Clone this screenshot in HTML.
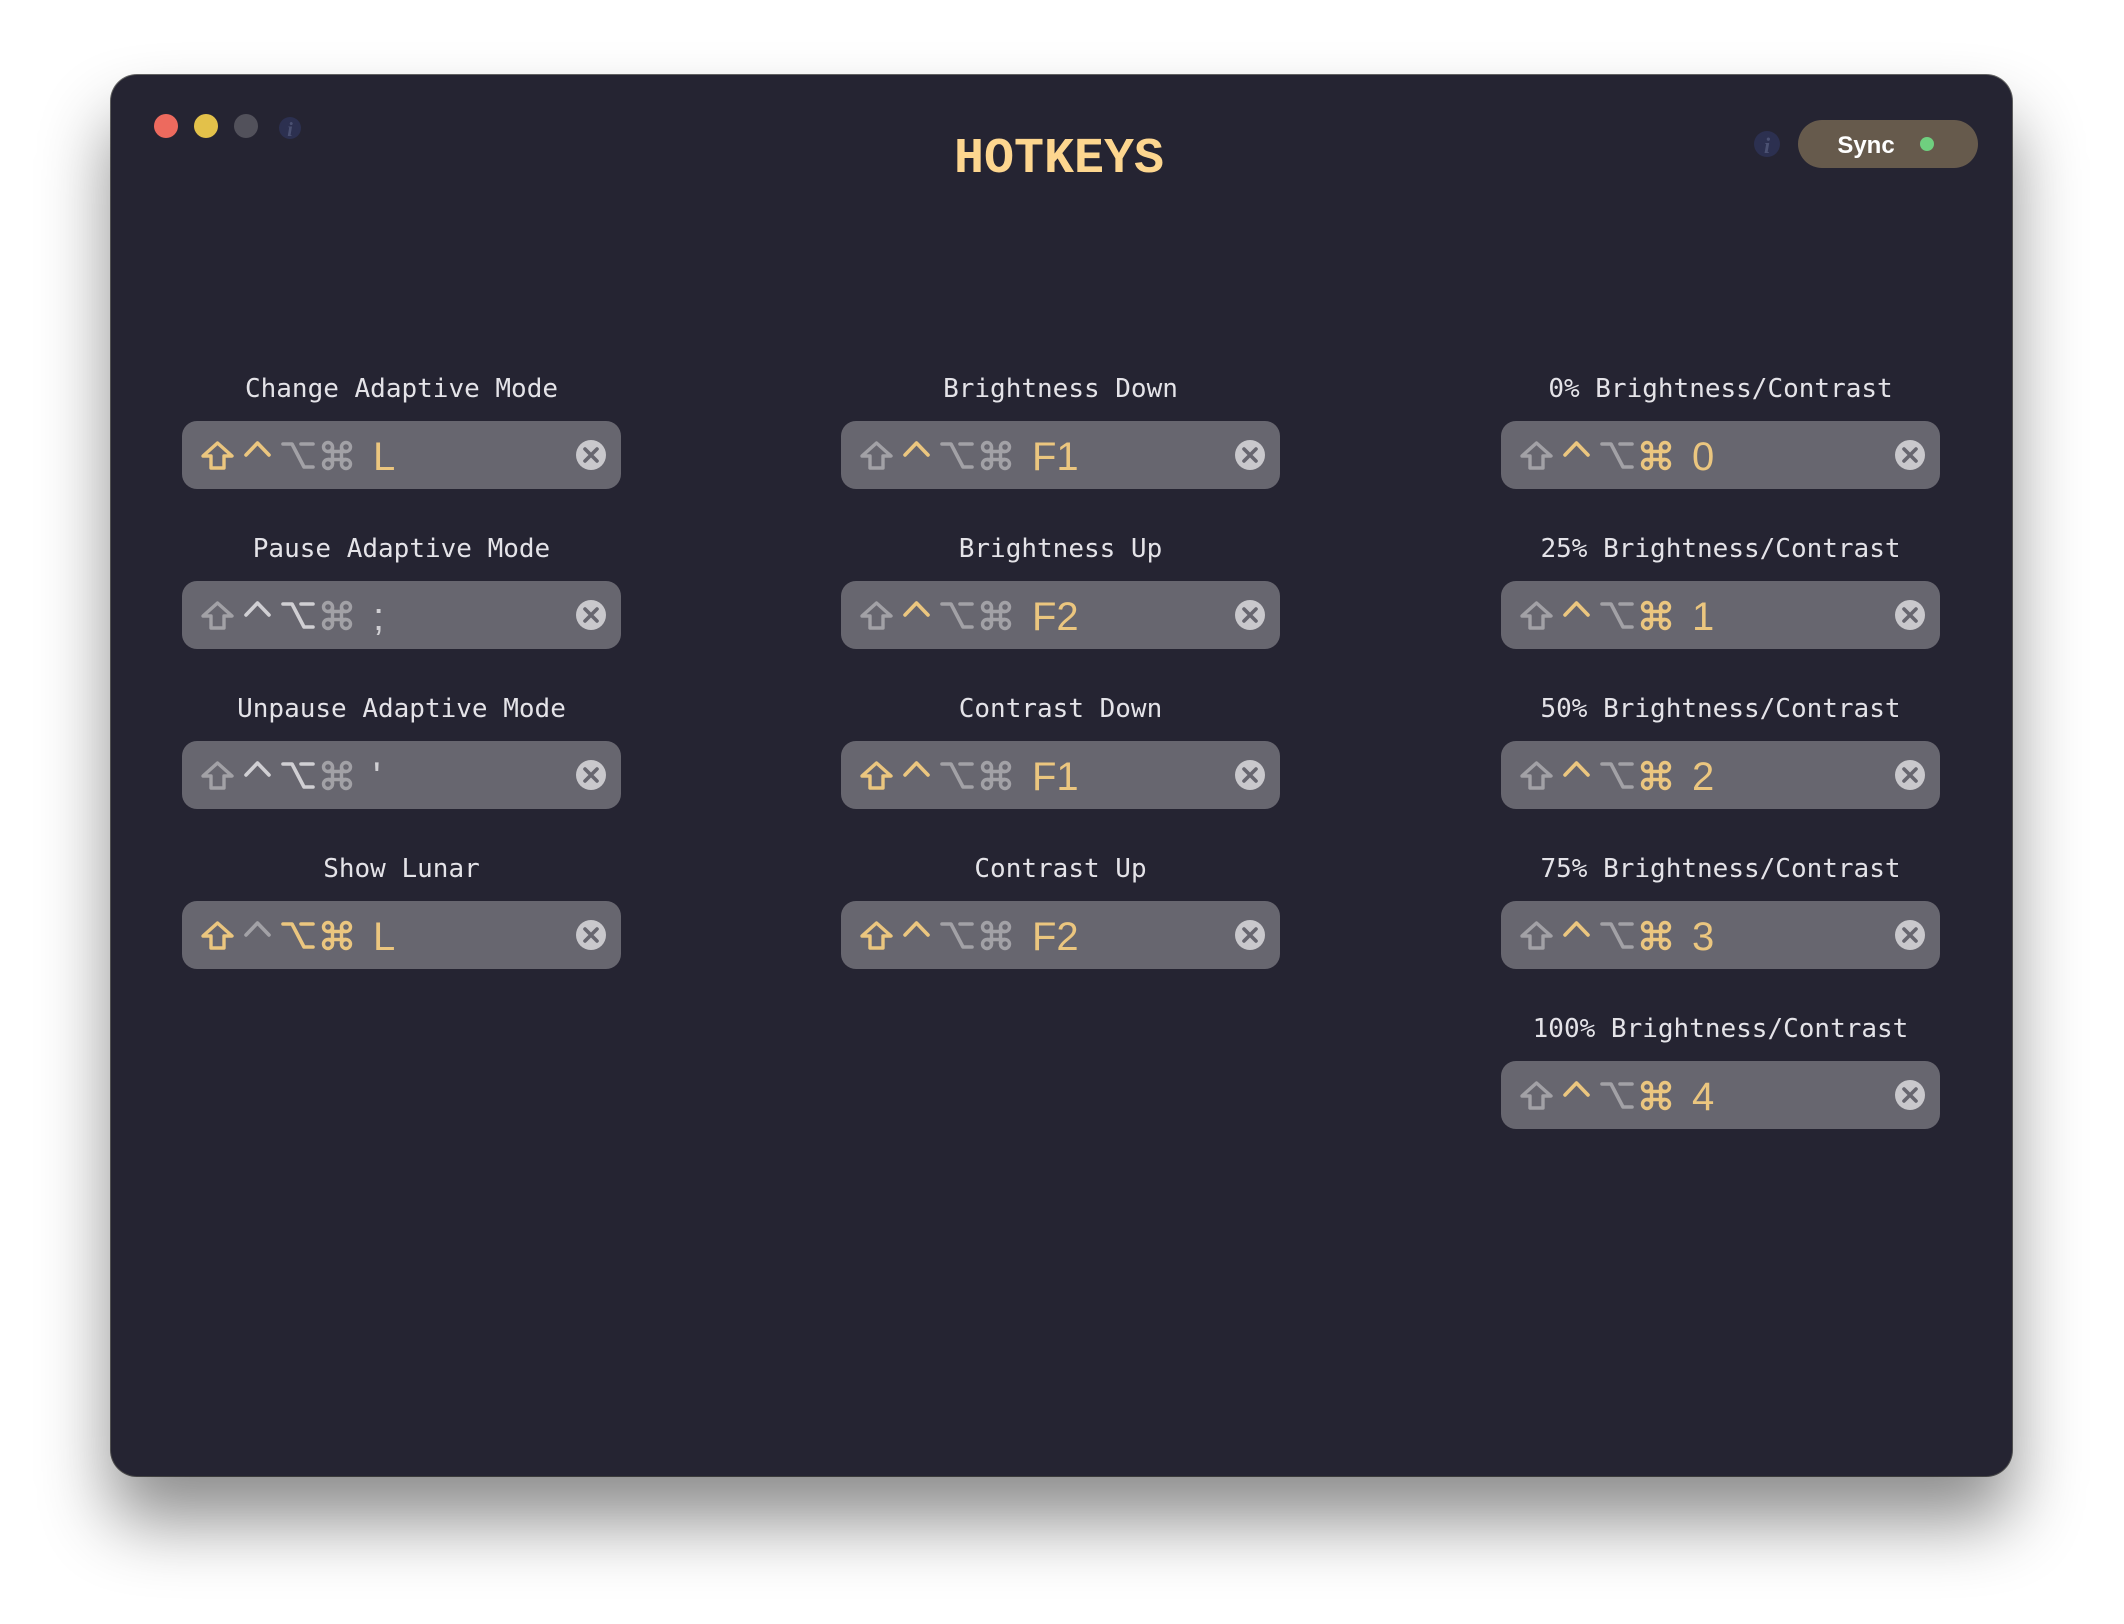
<!DOCTYPE html>
<html><head><meta charset="utf-8"><style>
html,body{margin:0;padding:0;background:#fff;width:2124px;height:1624px;overflow:hidden}
#win{position:absolute;left:111px;top:75px;width:1901px;height:1401px;background:#252432;border-radius:26px;box-shadow:0 45px 70px rgba(0,0,0,0.45),0 0 0 1px rgba(0,0,0,0.6)}
svg{position:absolute;left:0;top:0}
.lbl{font-family:"DejaVu Sans Mono","Liberation Mono",monospace;font-size:26px;fill:#e4e3e8}
.key{font-family:"Liberation Sans",sans-serif;font-size:40px}
</style></head><body>
<div id="win"></div>
<svg width="2124" height="1624" viewBox="0 0 2124 1624">
<defs>
<g id="shift"><path d="M16.5 2 L31 15 H23 V27 H10 V15 H2 Z" fill="none" stroke-width="3.4" stroke-linejoin="round"/></g>
<g id="caret"><path d="M2 14 L13.5 2 L25 14" fill="none" stroke-width="3.6" stroke-linecap="round" stroke-linejoin="round"/></g>
<g id="opt"><path d="M1 3 H10 L22 26 H31 M19 3 H31" fill="none" stroke-width="3.6" stroke-linecap="round" stroke-linejoin="round"/></g>
<g id="cmd" fill="none" stroke-width="3.4"><path d="M10.5 6 V23 M19.5 6 V23 M6 10.5 H24 M6 18.5 H24"/><circle cx="6" cy="6" r="4.5"/><circle cx="24" cy="6" r="4.5"/><circle cx="6" cy="23" r="4.5"/><circle cx="24" cy="23" r="4.5"/></g>
<g id="clr"><circle cx="0" cy="0" r="15" fill="#c9c8cc"/><path d="M-6 -6 L6 6 M6 -6 L-6 6" stroke="#67666f" stroke-width="3.6" stroke-linecap="round"/></g>
</defs>
<circle cx="166" cy="126" r="12" fill="#ed6a5e"/>
<circle cx="206" cy="126" r="12" fill="#e3c14a"/>
<circle cx="246" cy="126" r="12" fill="#52515b"/>
<circle cx="290" cy="128" r="11" fill="#2c3050"/>
<text x="290" y="136" text-anchor="middle" font-family="Liberation Serif,serif" font-style="italic" font-weight="bold" font-size="20" fill="#4b5172">i</text>
<text x="1059" y="172" text-anchor="middle" font-family="Liberation Mono,monospace" font-weight="bold" font-size="50" fill="#fdd68f">HOTKEYS</text>
<circle cx="1767" cy="144" r="13" fill="#2c3050"/>
<text x="1767" y="153" text-anchor="middle" font-family="Liberation Serif,serif" font-style="italic" font-weight="bold" font-size="22" fill="#4b5172">i</text>
<rect x="1798" y="120" width="180" height="48" rx="24" fill="#665a4c"/>
<text x="1866" y="153" text-anchor="middle" font-family="Liberation Sans,sans-serif" font-weight="bold" font-size="24" fill="#fff">Sync</text>
<circle cx="1927" cy="144" r="7" fill="#6fcf7f"/>

<g transform="translate(182,421)">
<text class="lbl" x="219.5" y="-24" text-anchor="middle">Change Adaptive Mode</text>
<rect width="439" height="68" rx="15" fill="#67666f"/>
<use href="#shift" x="19" y="20" stroke="#ebc67f"/><use href="#caret" x="62" y="20" stroke="#ebc67f"/><use href="#opt" x="100" y="20" stroke="#a2a1a6"/><use href="#cmd" x="140" y="20" stroke="#a2a1a6"/>
<text class="key" x="191" y="49" fill="#ebc67f">L</text><use href="#clr" x="409" y="34"/></g>

<g transform="translate(182,581)">
<text class="lbl" x="219.5" y="-24" text-anchor="middle">Pause Adaptive Mode</text>
<rect width="439" height="68" rx="15" fill="#67666f"/>
<use href="#shift" x="19" y="20" stroke="#a2a1a6"/><use href="#caret" x="62" y="20" stroke="#d0cfd3"/><use href="#opt" x="100" y="20" stroke="#d0cfd3"/><use href="#cmd" x="140" y="20" stroke="#a2a1a6"/>
<text class="key" x="191" y="49" fill="#d0cfd3">;</text><use href="#clr" x="409" y="34"/></g>

<g transform="translate(182,741)">
<text class="lbl" x="219.5" y="-24" text-anchor="middle">Unpause Adaptive Mode</text>
<rect width="439" height="68" rx="15" fill="#67666f"/>
<use href="#shift" x="19" y="20" stroke="#a2a1a6"/><use href="#caret" x="62" y="20" stroke="#d0cfd3"/><use href="#opt" x="100" y="20" stroke="#d0cfd3"/><use href="#cmd" x="140" y="20" stroke="#a2a1a6"/>
<text class="key" x="191" y="49" fill="#d0cfd3">'</text><use href="#clr" x="409" y="34"/></g>

<g transform="translate(182,901)">
<text class="lbl" x="219.5" y="-24" text-anchor="middle">Show Lunar</text>
<rect width="439" height="68" rx="15" fill="#67666f"/>
<use href="#shift" x="19" y="20" stroke="#ebc67f"/><use href="#caret" x="62" y="20" stroke="#a2a1a6"/><use href="#opt" x="100" y="20" stroke="#ebc67f"/><use href="#cmd" x="140" y="20" stroke="#ebc67f"/>
<text class="key" x="191" y="49" fill="#ebc67f">L</text><use href="#clr" x="409" y="34"/></g>

<g transform="translate(841,421)">
<text class="lbl" x="219.5" y="-24" text-anchor="middle">Brightness Down</text>
<rect width="439" height="68" rx="15" fill="#67666f"/>
<use href="#shift" x="19" y="20" stroke="#a2a1a6"/><use href="#caret" x="62" y="20" stroke="#ebc67f"/><use href="#opt" x="100" y="20" stroke="#a2a1a6"/><use href="#cmd" x="140" y="20" stroke="#a2a1a6"/>
<text class="key" x="191" y="49" fill="#ebc67f">F1</text><use href="#clr" x="409" y="34"/></g>

<g transform="translate(841,581)">
<text class="lbl" x="219.5" y="-24" text-anchor="middle">Brightness Up</text>
<rect width="439" height="68" rx="15" fill="#67666f"/>
<use href="#shift" x="19" y="20" stroke="#a2a1a6"/><use href="#caret" x="62" y="20" stroke="#ebc67f"/><use href="#opt" x="100" y="20" stroke="#a2a1a6"/><use href="#cmd" x="140" y="20" stroke="#a2a1a6"/>
<text class="key" x="191" y="49" fill="#ebc67f">F2</text><use href="#clr" x="409" y="34"/></g>

<g transform="translate(841,741)">
<text class="lbl" x="219.5" y="-24" text-anchor="middle">Contrast Down</text>
<rect width="439" height="68" rx="15" fill="#67666f"/>
<use href="#shift" x="19" y="20" stroke="#ebc67f"/><use href="#caret" x="62" y="20" stroke="#ebc67f"/><use href="#opt" x="100" y="20" stroke="#a2a1a6"/><use href="#cmd" x="140" y="20" stroke="#a2a1a6"/>
<text class="key" x="191" y="49" fill="#ebc67f">F1</text><use href="#clr" x="409" y="34"/></g>

<g transform="translate(841,901)">
<text class="lbl" x="219.5" y="-24" text-anchor="middle">Contrast Up</text>
<rect width="439" height="68" rx="15" fill="#67666f"/>
<use href="#shift" x="19" y="20" stroke="#ebc67f"/><use href="#caret" x="62" y="20" stroke="#ebc67f"/><use href="#opt" x="100" y="20" stroke="#a2a1a6"/><use href="#cmd" x="140" y="20" stroke="#a2a1a6"/>
<text class="key" x="191" y="49" fill="#ebc67f">F2</text><use href="#clr" x="409" y="34"/></g>

<g transform="translate(1501,421)">
<text class="lbl" x="219.5" y="-24" text-anchor="middle">0% Brightness/Contrast</text>
<rect width="439" height="68" rx="15" fill="#67666f"/>
<use href="#shift" x="19" y="20" stroke="#a2a1a6"/><use href="#caret" x="62" y="20" stroke="#ebc67f"/><use href="#opt" x="100" y="20" stroke="#a2a1a6"/><use href="#cmd" x="140" y="20" stroke="#ebc67f"/>
<text class="key" x="191" y="49" fill="#ebc67f">0</text><use href="#clr" x="409" y="34"/></g>

<g transform="translate(1501,581)">
<text class="lbl" x="219.5" y="-24" text-anchor="middle">25% Brightness/Contrast</text>
<rect width="439" height="68" rx="15" fill="#67666f"/>
<use href="#shift" x="19" y="20" stroke="#a2a1a6"/><use href="#caret" x="62" y="20" stroke="#ebc67f"/><use href="#opt" x="100" y="20" stroke="#a2a1a6"/><use href="#cmd" x="140" y="20" stroke="#ebc67f"/>
<text class="key" x="191" y="49" fill="#ebc67f">1</text><use href="#clr" x="409" y="34"/></g>

<g transform="translate(1501,741)">
<text class="lbl" x="219.5" y="-24" text-anchor="middle">50% Brightness/Contrast</text>
<rect width="439" height="68" rx="15" fill="#67666f"/>
<use href="#shift" x="19" y="20" stroke="#a2a1a6"/><use href="#caret" x="62" y="20" stroke="#ebc67f"/><use href="#opt" x="100" y="20" stroke="#a2a1a6"/><use href="#cmd" x="140" y="20" stroke="#ebc67f"/>
<text class="key" x="191" y="49" fill="#ebc67f">2</text><use href="#clr" x="409" y="34"/></g>

<g transform="translate(1501,901)">
<text class="lbl" x="219.5" y="-24" text-anchor="middle">75% Brightness/Contrast</text>
<rect width="439" height="68" rx="15" fill="#67666f"/>
<use href="#shift" x="19" y="20" stroke="#a2a1a6"/><use href="#caret" x="62" y="20" stroke="#ebc67f"/><use href="#opt" x="100" y="20" stroke="#a2a1a6"/><use href="#cmd" x="140" y="20" stroke="#ebc67f"/>
<text class="key" x="191" y="49" fill="#ebc67f">3</text><use href="#clr" x="409" y="34"/></g>

<g transform="translate(1501,1061)">
<text class="lbl" x="219.5" y="-24" text-anchor="middle">100% Brightness/Contrast</text>
<rect width="439" height="68" rx="15" fill="#67666f"/>
<use href="#shift" x="19" y="20" stroke="#a2a1a6"/><use href="#caret" x="62" y="20" stroke="#ebc67f"/><use href="#opt" x="100" y="20" stroke="#a2a1a6"/><use href="#cmd" x="140" y="20" stroke="#ebc67f"/>
<text class="key" x="191" y="49" fill="#ebc67f">4</text><use href="#clr" x="409" y="34"/></g>
</svg>
</body></html>
